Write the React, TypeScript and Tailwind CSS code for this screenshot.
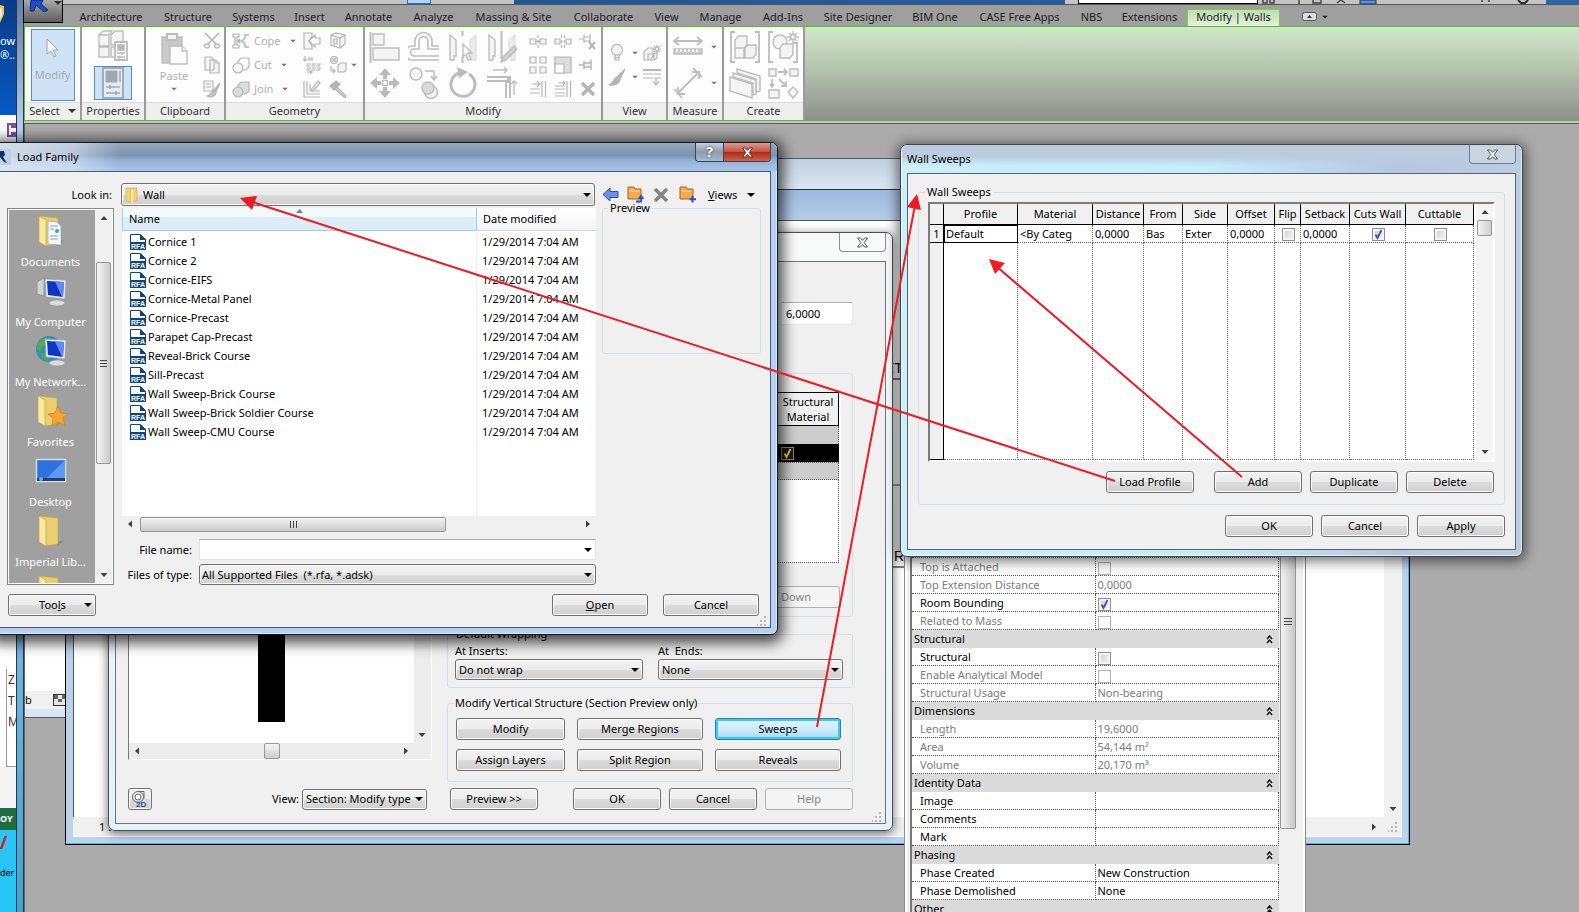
import type { ReactNode } from 'react'

const TABS = [
  { label: 'Architecture',   width: 'w-[66px]' },
  { label: 'Structure',      width: 'w-[48px]' },
  { label: 'Systems',        width: 'w-[43px]' },
  { label: 'Insert',         width: 'w-[29px]' },
  { label: 'Annotate',       width: 'w-[49px]' },
  { label: 'Analyze',        width: 'w-[41px]' },
  { label: 'Massing & Site', width: 'w-[79px]' },
  { label: 'Collaborate',    width: 'w-[61px]' },
  { label: 'View',           width: 'w-[25px]' },
  { label: 'Manage',         width: 'w-[43px]' },
  { label: 'Add-Ins',        width: 'w-[42px]' },
  { label: 'Site Designer',  width: 'w-[68px]' },
  { label: 'BIM One',        width: 'w-[46px]' },
  { label: 'CASE Free Apps', width: 'w-[83px]' },
  { label: 'NBS',            width: 'w-[21px]' },
  { label: 'Extensions',     width: 'w-[55px]' },
]

const FILES = [
  'Cornice 1',
  'Cornice 2',
  'Cornice-EIFS',
  'Cornice-Metal Panel',
  'Cornice-Precast',
  'Parapet Cap-Precast',
  'Reveal-Brick Course',
  'Sill-Precast',
  'Wall Sweep-Brick Course',
  'Wall Sweep-Brick Soldier Course',
  'Wall Sweep-CMU Course',
]

type Prop = {
  label: string
  value?: string
  kind?: 'group' | 'check'
  checked?: boolean
  dim?: boolean
}

const PROPS: Prop[] = [
  { label: 'Top Offset', value: '0,0000' },
  { label: 'Top is Attached', kind: 'check', dim: true },
  { label: 'Top Extension Distance', value: '0,0000', dim: true },
  { label: 'Room Bounding', kind: 'check', checked: true },
  { label: 'Related to Mass', kind: 'check', dim: true },
  { label: 'Structural', kind: 'group' },
  { label: 'Structural', kind: 'check' },
  { label: 'Enable Analytical Model', kind: 'check', dim: true },
  { label: 'Structural Usage', value: 'Non-bearing', dim: true },
  { label: 'Dimensions', kind: 'group' },
  { label: 'Length', value: '19,6000', dim: true },
  { label: 'Area', value: '54,144 m²', dim: true },
  { label: 'Volume', value: '20,170 m³', dim: true },
  { label: 'Identity Data', kind: 'group' },
  { label: 'Image', value: '' },
  { label: 'Comments', value: '' },
  { label: 'Mark', value: '' },
  { label: 'Phasing', kind: 'group' },
  { label: 'Phase Created', value: 'New Construction' },
  { label: 'Phase Demolished', value: 'None' },
  { label: 'Other', kind: 'group' },
]

const SWEEP_COLS = [
  { label: 'Profile',   width: 'w-[74px]' },
  { label: 'Material',  width: 'w-[75px]' },
  { label: 'Distance',  width: 'w-[51px]' },
  { label: 'From',      width: 'w-[39px]' },
  { label: 'Side',      width: 'w-[45px]' },
  { label: 'Offset',    width: 'w-[47px]' },
  { label: 'Flip',      width: 'w-[26px]' },
  { label: 'Setback',   width: 'w-[49px]' },
  { label: 'Cuts Wall', width: 'w-[56px]' },
  { label: 'Cuttable',  width: 'w-[68px]' },
]

/* ---------- small controls ---------- */

function Caret({ className = '' }: { className?: string }) {
  return (
    <svg width="8" height="4" viewBox="0 0 8 4" className={`shrink-0 ${className}`}>
      <path d="M0 0h8L4 4z" fill="currentColor" />
    </svg>
  )
}

function Btn({ children, className = '', disabled = false, hot = false }: {
  children: ReactNode
  className?: string
  disabled?: boolean
  hot?: boolean
}) {
  return (
    <button
      type="button"
      disabled={disabled}
      className={[
        'h-[22px] shrink-0 rounded-[3px] border flex items-center justify-center whitespace-nowrap',
        hot
          ? 'border-[#2c7fb5] bg-linear-to-b from-[#e8f6fd] via-[#cdeafb] to-[#a5dbf7] shadow-[inset_0_0_0_2px_#3fc8f5]'
          : disabled
            ? 'border-[#adb2b5] bg-[#f4f4f4] text-[#838383]'
            : 'border-[#707070] bg-[linear-gradient(#f3f3f3_0%,#ebebeb_50%,#dcdcdc_51%,#cfcfcf_100%)] shadow-[inset_0_0_0_1px_#fbfbfb]',
        className,
      ].join(' ')}
    >
      {children}
    </button>
  )
}

function Combo({ id, label, options, className = '', inset = 'pl-[3px]' }: {
  id: string
  label: string
  options: string[]
  className?: string
  inset?: string
}) {
  return (
    <div className={`relative ${className}`}>
      <select
        id={id}
        aria-label={label}
        className={`block size-full appearance-none rounded-[3px] border border-[#707070] bg-[linear-gradient(#f3f3f3_0%,#ebebeb_50%,#dcdcdc_51%,#cfcfcf_100%)] shadow-[inset_0_0_0_1px_#fbfbfb] ${inset}`}
      >
        {options.map(o => <option key={o}>{o}</option>)}
      </select>
      <Caret className="absolute right-1 top-1/2 -translate-y-1/2 pointer-events-none" />
    </div>
  )
}

function Check({ label, checked = false, dim = false, dark = false }: {
  label: string
  checked?: boolean
  dim?: boolean
  dark?: boolean
}) {
  return (
    <span className="relative inline-block size-[13px] align-middle">
      <input
        type="checkbox"
        aria-label={label}
        defaultChecked={checked}
        disabled={dim}
        className={[
          'block size-[13px] appearance-none border',
          dark
            ? 'border-[#8a8370] bg-[#1b1a16]'
            : dim
              ? 'border-[#b1b1b1] bg-[#fbfbfb]'
              : 'border-[#8e8f8f] bg-linear-to-br from-[#cbcfd5] to-[#f6f6f6] shadow-[inset_0_0_0_2px_#f4f4f4]',
        ].join(' ')}
      />
      {checked && (
        <svg viewBox="0 0 13 13" className="absolute inset-0 pointer-events-none">
          <path d="M3.5 6.5l2 3.5 4-8" fill="none" stroke={dark ? '#e8c96a' : '#3b55a3'} strokeWidth="1.8" />
        </svg>
      )}
    </span>
  )
}

function Arrow({ dir }: { dir: 'up' | 'down' | 'left' | 'right' }) {
  const d = {
    up: 'M4.500 10L8 6l3.500 4z',
    down: 'M4.500 6L8 10l3.500-4z',
    left: 'M10 4.500L6 8l4 3.500z',
    right: 'M6 4.500L10 8l-4 3.500z',
  }[dir]
  return (
    <svg width="16" height="16" viewBox="0 0 16 16" className="shrink-0">
      <path d={d} fill="#404040" />
    </svg>
  )
}

function Grip({ className = '' }: { className?: string }) {
  return (
    <svg width="10" height="10" viewBox="0 0 10 10" className={className}>
      <path d="M7 0h2v2H7zM7 4h2v2H7zM7 8h2v2H7zM3 4h2v2H3zM3 8h2v2H3zM0 8h1v2H0z" fill="#b8b8b8" />
    </svg>
  )
}

function CloseGlyph({ light = false }: { light?: boolean }) {
  return (
    <svg width="13" height="11" viewBox="0 0 13 11">
      <path
        d="M1.5 1h3l2 2.4L8.500 1h3L8.200 5.500l3.300 4.500h-3l-2-2.400L4.500 10h-3l3.300-4.500z"
        fill={light ? '#fff' : '#f4f6f8'}
        stroke={light ? '#5b2a26' : '#4d5663'}
      />
    </svg>
  )
}

function RevitMark({ className = '' }: { className?: string }) {
  return (
    <svg viewBox="0 0 16 16" className={className}>
      <rect width="16" height="16" fill="#bcd0e6" />
      <path d="M0 12L3 2h6l1 4-2 2 4 6-3-1-4-5-2 5z" fill="#0f2f73" />
    </svg>
  )
}

/* ---------- ribbon icons ---------- */

const big = 'size-8 shrink-0 fill-[#f4f4f4] stroke-[#bdbdbd]'
const small = 'size-[18px] shrink-0 fill-[#f4f4f4] stroke-[#b5b5b5]'

function Big({ children }: { children: ReactNode }) {
  return <svg viewBox="0 0 32 32" className={big} strokeWidth="1.4">{children}</svg>
}

function Small({ children }: { children: ReactNode }) {
  return <svg viewBox="0 0 18 18" className={small} strokeWidth="1.2">{children}</svg>
}

const IconCubes = () => (
  <Big>
    <path d="M2 5l4-4h9l-3 4zM2 5h10v11H2zM14 5l4-4h8v9l-3 5h-9zM2 17h10v10H2zM14 17h4v10h-4z" />
    <path d="M18 12h12v18H18z" strokeWidth="1.8" />
    <path d="M21 15h6v5h-6z" fill="#b5b5b5" />
    <path d="M20 23h8M20 27h8M25 22v3M22 26v3" />
  </Big>
)

const IconSheet = () => (
  <svg viewBox="0 0 32 32" className="size-8 fill-[#e3ebf4] stroke-[#a3abb5]">
    <path d="M6 1h20v30H6z" strokeWidth="2" />
    <path d="M9 4h11v11H9z" fill="#9fa6ae" />
    <path d="M23 4v11M9 20h14M9 26h14M13 18v4M19 24v4" strokeWidth="1.6" />
  </svg>
)

const IconPaste = () => (
  <Big>
    <path d="M4 4h20v26H4z" fill="#c9c9c9" />
    <path d="M9 1h10v6H9z" strokeWidth="2" />
    <path d="M12 13h12l5 5v13H12z" fill="#fdfdfd" />
    <path d="M24 13v5h5" />
  </Big>
)

const IconCutScissors = () => (
  <Small>
    <path d="M2 1l12 12M16 1L4 13" strokeWidth="1.600" />
    <ellipse cx="4" cy="14" rx="2.500" ry="1.800" />
    <ellipse cx="14" cy="14" rx="2.500" ry="1.800" />
  </Small>
)

const IconCopy = () => (
  <Small>
    <path d="M2 1h6l3 3v10H2zM7 4h6l3 3v10H7z" />
    <path d="M13 4v3h3" />
  </Small>
)

const IconMatch = () => (
  <Small>
    <path d="M1 1h9v10H1z" />
    <path d="M3 4h5M3 7h5" />
    <path d="M17 3l-6 7 2 2z" fill="#b5b5b5" />
    <path d="M11 10c-3 1-2 5-7 6 4 2 9 0 9-4z" fill="#c4c4c4" />
  </Small>
)

const IconCope = () => (
  <Small>
    <path d="M1 2h6v3H5v8h2v3H1v-3h2V5H1z" />
    <path d="M17 3h-4v3l-3 3 3 3v3h4M10 9H6M8 7L6 9l2 2" fill="none" strokeWidth="1.5" />
  </Small>
)

const IconCutShape = () => (
  <Small>
    <path d="M6 5l3-3h8v9l-3 3H6z" fill="#fff" />
    <circle cx="6" cy="12" r="5" />
  </Small>
)

const IconJoin = () => (
  <Small>
    <path d="M6 5l3-3h8v9l-3 3H6z" fill="#dcdcdc" />
    <circle cx="6" cy="12" r="5" fill="#dcdcdc" />
  </Small>
)

const IconWallJoin = () => (
  <Small>
    <path d="M1 1h8v3l-3 5 3 5v3H1z" />
    <path d="M17 6h-5V3L6 9l6 6v-3h5z" fill="#fff" />
  </Small>
)

const IconSplitFace = () => (
  <Small>
    <path d="M2 3l9 3 5-3v9l-5 4-9-3z" />
    <path d="M2 3l5-2 9 2M11 6v10M5 7h3v5H5z" />
  </Small>
)

const IconBeam = () => (
  <Small>
    <path d="M2 0v5M0 3l2 2 2-2M6 1v4M9 1v4M6 3h3" fill="none" />
    <path d="M4 8h13v2H4zM4 12h13v2H4z" strokeDasharray="4 1" />
    <path d="M4 16h5M7 15l2 1-2 2" fill="none" />
  </Small>
)

const IconPaint = () => (
  <Small>
    <circle cx="5" cy="4" r="3.500" />
    <path d="M3 2l4 4M7 2L3 6M2 10v5h4M4 13l2 2-2 2" fill="none" />
    <path d="M9 9l3-2h5v7l-2 2H9z" />
  </Small>
)

const IconDemolish = () => (
  <Small>
    <path d="M1 1v16h16M4 1v13h13M7 4v7h10" fill="none" />
    <path d="M8 10l7-9 2 2-7 8z" />
  </Small>
)

const IconHammer = () => (
  <Small>
    <path d="M1 6l6-5 4 3-6 6z" fill="#b5b5b5" />
    <path d="M8 7l9 9-1 2L6 9z" fill="#d0d0d0" />
  </Small>
)

const IconAlign = () => (
  <Big>
    <path d="M1.500 1v31" strokeWidth="2" />
    <path d="M4 3h11v11H4zM4 17h26v12H4z" />
  </Big>
)

const IconOffset = () => (
  <Big>
    <path d="M31 25H6a3 3 0 010-7h5v-8a4.500 4.500 0 019 0v8h11" fill="none" strokeWidth="1.600" />
    <path d="M31 29H5a7 7 0 01-1-14h3v-5a8.500 8.500 0 0117 0v5h7" fill="none" strokeWidth="1.600" />
  </Big>
)

const IconMirror = () => (
  <Big>
    <path d="M3 4l6 5v16H7v4H3z" />
    <path d="M29 4l-6 5v16h2v4h4z" fill="#ebebeb" stroke="#e0e0e0" />
    <path d="M15.500 0v5M15.500 26v6" strokeWidth="2" />
    <path d="M16 13l9 9h-4l3 6-3 1-2-6-3 3z" fill="#fff" />
  </Big>
)

const IconMirrorDraw = () => (
  <Big>
    <path d="M3 4l6 5v16H7v4H3z" />
    <path d="M29 4l-6 5v16h2v4h4z" fill="#ebebeb" stroke="#e0e0e0" />
    <path d="M15.500 0v28" strokeWidth="2" />
    <path d="M28 15l3 3-11 11-5 2 2-5z" fill="#d0d0d0" />
  </Big>
)

const IconMove = () => (
  <Big>
    <path d="M16 1l6 7h-4v4h-4V8h-4zM16 31l-6-7h4v-4h4v4h4zM1 16l7-6v4h4v4H8v4zM31 16l-7 6v-4h-4v-4h4v-4z" fill="#bababa" stroke="none" />
    <path d="M13.500 13.500h5v5h-5z" fill="#fff" />
  </Big>
)

const IconCopyShape = () => (
  <Big>
    <circle cx="8" cy="7" r="6" />
    <circle cx="23" cy="25" r="6.500" />
    <circle cx="20" cy="21" r="6" fill="#dadada" />
    <path d="M17 4h9v8M23 9l3 4 3-4" fill="none" />
  </Big>
)

const IconRotate = () => (
  <Big>
    <path d="M22 7a12 12 0 11-10-1" fill="none" strokeWidth="3" />
    <path d="M10 0l11 5-9 6z" fill="#bababa" stroke="none" />
  </Big>
)

const IconTrim = () => (
  <Big>
    <path d="M1 10h23v21M1 14h19v17M22 10v6" fill="none" strokeWidth="2" />
    <path d="M7 3h14M18 0l3 3-3 3M28 28V14M25 17l3-3 3 3" fill="none" />
  </Big>
)

const IconSplit = () => (
  <Small><path d="M1 7h6v5H1zM11 7h6v5h-6zM9 3v3M9 8v3M9 13v3M6 9.500h6" /></Small>
)

const IconSplitGap = () => (
  <Small>
    <path d="M1 7h5v5H1zM12 7h5v5h-5z" />
    <path d="M7.500 3v13M10.500 3v13" strokeDasharray="3 2" />
  </Small>
)

const IconUnpin = () => (
  <Small>
    <path d="M0 7h5M5 3v8M5 5h6M5 9h6M11 2v9" />
    <path d="M10 10l6 7M16 10l-6 7" strokeWidth="2" />
  </Small>
)

const IconArray = () => (
  <Small><path d="M1 1h6v6H1zM11 1h6v6h-6zM1 11h6v6H1zM11 11h6v6h-6z" /></Small>
)

const IconScale = () => (
  <Small>
    <path d="M1 1h16v16H1z" fill="#dedede" />
    <path d="M1 8h9v9H1z" fill="#fff" />
  </Small>
)

const IconPin = () => (
  <Small><path d="M0 9h5M5 5v8M5 7h7v4H5M12 4v10" strokeWidth="1.500" /></Small>
)

const IconTrimOne = () => (
  <Small><path d="M1 9h10M1 13h10M13 1v16M16.500 1v16M3 4h8M8 1l3 3-3 3" fill="none" /></Small>
)

const IconTrimMany = () => (
  <Small><path d="M1 6h10M1 9h10M1 13h10M1 16h10M13 1v16M16.500 1v16M4 3h7M9 1l2 2-2 2" fill="none" /></Small>
)

const IconDelete = () => (
  <Small><path d="M3 3l12 12M15 3L3 15" strokeWidth="3.500" /></Small>
)

const IconBulb = () => (
  <Small>
    <circle cx="8" cy="6" r="5.500" />
    <path d="M6 11h4v5H6zM6 13.500h4" />
  </Small>
)

const IconLineBrush = () => (
  <Small>
    <path d="M16 1L8 9l3 2z" fill="#b5b5b5" />
    <path d="M8 9c-4 1-3 6-8 8 6 1 11-2 11-6z" fill="#b5b5b5" />
  </Small>
)

const IconDisplace = () => (
  <Small>
    <path d="M1 8l4-4h5v8l-3 4H1zM5 10h6v6H5zM11 10l3-2v6l-3 2" />
    <path d="M14 1v8M10 5h8M11 2l6 6M17 2l-6 6" />
    <circle cx="14" cy="5" r="1.800" />
  </Small>
)

const IconThin = () => (
  <Small>
    <path d="M0 2h18" strokeWidth="2" />
    <path d="M0 6h18M0 10h18" strokeDasharray="10 1" />
    <path d="M13 10v6M10 13l3 4 3-4" fill="none" />
  </Small>
)

const IconRuler = () => (
  <Big>
    <path d="M2 10h28M7 6l-5 4 5 4M25 6l5 4-5 4" fill="none" strokeWidth="1.800" />
    <path d="M2 18h28v5H2z" fill="#cfcfcf" />
    <path d="M5 18v3M9 18v3M13 18v3M17 18v3M21 18v3M25 18v3" stroke="#fff" />
  </Big>
)

const IconDim = () => (
  <Big>
    <path d="M5 27L27 5M2 22l8 9M21 1l9 9M6 20v7h7M20 5h7v7" fill="none" strokeWidth="1.800" />
  </Big>
)

const IconGroup = () => (
  <Big>
    <path d="M6 1H2v30h4M26 1h4v30h-4" fill="none" strokeWidth="1.800" />
    <path d="M6 9l4-4h8v9l-3 3H6zM6 17h9v10H6zM16 17l3-3h8v9l-3 4h-8z" />
  </Big>
)

const IconAssembly = () => (
  <Big>
    <path d="M6 1H2v30h4M26 12h4v19h-4" fill="none" strokeWidth="1.800" />
    <circle cx="13" cy="11" r="7" />
    <path d="M13 17l3-4h10v10l-3 4H13z" />
    <path d="M26 0v12M20 6h12M22 2l8 8M30 2l-8 8" />
    <circle cx="26" cy="6" r="2.500" />
  </Big>
)

const IconParts = () => (
  <Big>
    <path d="M8 2l23 7v15l-4 1V12L8 6z" />
    <path d="M4 6l23 7v14l-3 1V16L4 10z" />
    <path d="M1 10l22 7v14L1 24z" />
  </Big>
)

const IconSimilar = () => (
  <Big>
    <path d="M2 2h7v7H2zM23 2h8v7h-8zM2 23h10v8H2zM26 20l5 5-5 6-5-6z" />
    <path d="M11 5h9M17 2l3 3-3 3M5 12v7M3 17l2 3 2-3M12 12l7 7M19 14v5h-5" fill="none" strokeWidth="1.800" />
  </Big>
)

/* ---------- ribbon ---------- */

function Panel({ title, className, children, caret = false }: {
  title: string
  className: string
  children: ReactNode
  caret?: boolean
}) {
  return (
    <section className={`flex flex-col shrink-0 bg-[#fdfdfd] border-r-2 border-[#9a9a9a] ${className}`}>
      <div className="h-[75px] flex items-center justify-center text-[#b0b0b0]">{children}</div>
      <h2 className="flex-1 flex items-center justify-center gap-2 pb-[2px] bg-[#eee] border-t border-[#dcdcdc] text-[#333] whitespace-nowrap">
        {title}
        {caret && <Caret />}
      </h2>
    </section>
  )
}

function GeoRow({ icon, label }: { icon: ReactNode; label: string }) {
  return (
    <button type="button" disabled className="flex items-center gap-1 h-6">
      {icon}
      {label}
      <Caret className="ml-1 text-[#777] scale-75" />
    </button>
  )
}

function Ribbon() {
  return (
    <div className="h-[95px] flex shrink-0 border-y border-[#56c222] border-l bg-linear-to-b from-[#d1e7c8] via-[#b2c0ac] via-50% to-[#8f8f8f]">
      <Panel title="Select" caret className="w-[57px]">
        <button type="button" disabled className="w-11 h-[72px] border border-[#4b8fd6] bg-[#cfe2f5] flex flex-col items-center gap-2.5 pt-2 text-[#a3acb5]">
          <svg viewBox="0 0 14 20" className="h-5 w-3.5 fill-[#f6f6f6] stroke-[#9aa3ad]">
            <path d="M1 1v15l4-3 3 6 2-1-3-6h5z" />
          </svg>
          Modify
        </button>
      </Panel>
      <Panel title="Properties" className="w-16">
        <div className="flex flex-col items-center gap-1">
          <IconCubes />
          <button type="button" aria-label="Properties" disabled className="w-[38px] h-[34px] border border-[#4b8fd6] bg-[#cfe2f5] flex items-center justify-center">
            <IconSheet />
          </button>
        </div>
      </Panel>
      <Panel title="Clipboard" className="w-20">
        <div className="w-full flex justify-between pl-3 pr-[3px]">
          <button type="button" disabled className="flex flex-col items-center gap-1 pt-[2px]">
            <IconPaste />
            Paste
            <Caret className="text-[#777] scale-75" />
          </button>
          <div className="flex flex-col py-px gap-1.5">
            <IconCutScissors />
            <IconCopy />
            <IconMatch />
          </div>
        </div>
      </Panel>
      <Panel title="Geometry" className="w-[139px]">
        <div className="w-full flex pl-1.5">
          <div className="w-[71px]">
            <GeoRow icon={<IconCope />} label="Cope" />
            <GeoRow icon={<IconCutShape />} label="Cut" />
            <GeoRow icon={<IconJoin />} label="Join" />
          </div>
          <div className="w-[26px] flex flex-col gap-1.5 py-[3px]">
            <IconWallJoin />
            <IconBeam />
            <IconDemolish />
          </div>
          <div className="flex flex-col gap-1.5 py-[3px]">
            <IconSplitFace />
            <IconPaint />
            <IconHammer />
          </div>
          <Caret className="self-center ml-[3px] text-[#777] scale-75" />
        </div>
      </Panel>
      <Panel title="Modify" className="w-[238px]">
        <div className="w-full flex justify-between px-1">
          <div className="grid grid-cols-4 gap-x-[7px] gap-y-1">
            <IconAlign />
            <IconOffset />
            <IconMirror />
            <IconMirrorDraw />
            <IconMove />
            <IconCopyShape />
            <IconRotate />
            <IconTrim />
          </div>
          <div className="grid grid-cols-3 gap-x-[7px] gap-y-1.5 content-center">
            <IconSplit />
            <IconSplitGap />
            <IconUnpin />
            <IconArray />
            <IconScale />
            <IconPin />
            <IconTrimOne />
            <IconTrimMany />
            <IconDelete />
          </div>
        </div>
      </Panel>
      <Panel title="View" className="w-[65px]">
        <div className="grid grid-cols-[18px_8px_18px] gap-x-1 gap-y-1.5 items-center">
          <IconBulb />
          <Caret className="text-[#777] scale-75" />
          <IconDisplace />
          <IconLineBrush />
          <Caret className="text-[#777] scale-75" />
          <IconThin />
        </div>
      </Panel>
      <Panel title="Measure" className="w-14">
        <div className="grid grid-cols-[32px_8px] gap-x-1.5 gap-y-1 items-center">
          <IconRuler />
          <Caret className="text-[#777] scale-75" />
          <IconDim />
          <Caret className="text-[#777] scale-75" />
        </div>
      </Panel>
      <Panel title="Create" className="w-[81px] border-r-0">
        <div className="grid grid-cols-2 gap-x-1.5 gap-y-1">
          <IconGroup />
          <IconAssembly />
          <IconParts />
          <IconSimilar />
        </div>
      </Panel>
    </div>
  )
}

function TabBar() {
  return (
    <nav className="h-[21px] shrink-0 bg-[#9f9f9f] pl-[54px] flex text-[#1c1c1c]">
      <div className="flex gap-5 pt-[2px]">
        {TABS.map(tab => (
          <a key={tab.label} href="#" className={`flex items-center justify-center whitespace-nowrap ${tab.width}`}>
            {tab.label}
          </a>
        ))}
      </div>
      <a href="#" className="ml-2.5 mt-1 pb-[2px] w-[93px] border border-b-0 border-[#6fd63b] bg-linear-to-b from-[#c0dcb4] to-[#e2f4da] flex items-center justify-center whitespace-nowrap">
        Modify | Walls
      </a>
      <button type="button" aria-label="Minimize ribbon" className="ml-[22px] pt-[2px] flex items-center gap-1">
        <svg width="15" height="9" viewBox="0 0 15 9">
          <rect x=".5" y=".5" width="14" height="8" rx="2" fill="#d9dde2" stroke="#555" />
          <path d="M5 6l2.500-3L10 6z" fill="#333" />
        </svg>
        <Caret className="scale-75" />
      </button>
    </nav>
  )
}

function QuickAccess() {
  return (
    <div className="h-[5px] shrink-0 flex bg-linear-to-r from-[#1b4f8e] to-[#2b67a8] border-b border-[#555] overflow-hidden">
      <div className="w-[490px] bg-[#c4c4c4] flex justify-end pr-[83px]">
        <span className="w-6 border border-t-0 border-[#1d6fd1] bg-[#b5d3f3]" />
      </div>
      <div className="ml-auto w-[481px] bg-[#c4c4c4] pl-[13px] flex">
        <span className="w-[180px] bg-white border border-t-0 border-black" />
        <svg viewBox="0 0 280 4" className="w-[280px] h-1 ml-1">
          <path d="M1 0v3h4V0M8 0v3h4V0M37 0v4M51 0v3h8V0M75 3l4-3 4 3M220 0v2M227 0v2" fill="none" stroke="#444" strokeWidth="1.500" />
          <path d="M98 0h16v4H98z" fill="#5b8fe0" stroke="#234" />
          <path d="M256 0l3 3h4l3-3" fill="none" stroke="#333" strokeWidth="2" />
        </svg>
      </div>
      <div className="w-[33px]" />
    </div>
  )
}

/* ---------- things behind the dialogs ---------- */

function DesktopStrip() {
  return (
    <div className="w-4 shrink-0 flex flex-col overflow-hidden whitespace-nowrap bg-white">
      <div className="h-[115px] shrink-0 bg-linear-to-b from-[#0a3a86] to-[#0659c4] text-white text-[11px] leading-[14px]">
        <svg viewBox="0 0 16 34" className="w-4 h-[34px]">
          <path d="M0 5l4 1v8l-4 9z" fill="#f2c53c" />
          <path d="M0 8l2 1v6l-2 5z" fill="#e9eef7" />
        </svg>
        <div>ow</div>
        <div>®..</div>
      </div>
      <div className="h-[554px] shrink-0 pt-2 pl-[7px]">
        <svg viewBox="0 0 14 14" className="size-3.5">
          <path d="M1 1h12v12H1z" fill="#fff" stroke="#7a4fa3" strokeWidth="2" />
          <path d="M4 1h6v4H4zM4 9h6v4H4z" fill="#7a4fa3" />
        </svg>
      </div>
      <div className="h-[98px] shrink-0 ml-[6px] border-l border-[#999] border-b pl-px text-xs leading-[21px] text-[#5e231c]">
        <div>Z</div>
        <div>T</div>
        <div>M</div>
      </div>
      <div className="h-[41px] shrink-0 bg-[#f4f4f4]" />
      <div className="h-[22px] shrink-0 bg-[#1e6e42] text-white text-[9px] font-bold leading-[22px]">OY</div>
      <div className="flex-1 bg-[#27c6f6] text-[9px] text-black">
        <div className="h-9 text-lg leading-6 text-[#e8131c] font-bold">/</div>
        der
      </div>
    </div>
  )
}

function ProjectWindows() {
  return (
    <>
      {/* 3D view, only its corners are visible */}
      <div className="absolute left-0 top-[34px] w-[1310px] h-[560px] flex flex-col border-y border-[#4f5964] bg-[#d9e6f4]">
        <div className="h-[30px] shrink-0 bg-linear-to-b from-[#c2cfdd] to-[#d8e5f2]" />
        <div className="flex-1 bg-white" />
        <div className="h-[18px] shrink-0 mb-[8px] bg-[#f0f0f0] flex items-center gap-[21px]">
          b
          <svg viewBox="0 0 14 12" className="w-3.5 h-3">
            <rect x=".5" y=".5" width="13" height="11" fill="#e6e8ea" stroke="#333" />
            <path d="M1 1h4v4H1zM9 1h4v4H9zM5 5h4v3H5z" fill="#666" />
          </svg>
        </div>
      </div>

      {/* floor plan */}
      <div className="absolute left-10 top-[65px] w-[1345px] h-[656px] border border-black border-t-[#333] bg-[#bad2ec] shadow-[inset_-1px_-1px_0_#35c3df] flex flex-col pb-[7px] px-[7px]">
        <div className="h-[30px] shrink-0 bg-linear-to-b from-[#9db9da] to-[#b5cdea]" />
        <div className="flex-1 border-t border-l border-[#555] bg-white flex">
          <div className="flex-1 relative">
            <svg viewBox="0 0 30 300" className="absolute left-[809px] top-[130px] w-[30px] h-[300px]">
              <path d="M4 28h22M4 216h22" stroke="#000" />
              <path d="M4 134h26" stroke="#176b17" />
              <text x="2" y="22" fontSize="14" fontFamily="Liberation Sans">ET</text>
              <text x="11" y="210" fontSize="14" fontFamily="Liberation Sans">R</text>
            </svg>
          </div>
          <div className="w-[18px] bg-[#f1f1f1] flex flex-col justify-end items-center">
            <Arrow dir="down" />
          </div>
        </div>
        <div className="h-5 shrink-0 bg-[#f0f0f0] flex items-center border-b border-white pl-[26px]">
          1 : 100
          <span className="ml-auto mr-1.5"><Arrow dir="right" /></span>
          <Grip className="mr-1" />
        </div>
      </div>
    </>
  )
}

function Chevrons() {
  return (
    <svg width="7" height="9" viewBox="0 0 7 9" className="ml-auto mr-1.5">
      <path d="M1 4l2.500-3L6 4M1 8l2.500-3L6 8" fill="none" stroke="#000" strokeWidth="1.300" />
    </svg>
  )
}

function PropertiesPalette() {
  return (
    <aside className="absolute left-[904px] top-[540px] bottom-0 w-[402px] overflow-hidden bg-[#f0f0f0] border-x border-[#8b8b8b] shadow-[inset_2px_0_0_#fff,inset_-2px_0_0_#fff] pl-[5px] pr-2 flex">
      <div className="flex-1 border-l-2 border-[#777] bg-white">
        <table className="w-full table-fixed border-separate border-spacing-0">
          <tbody>
            {PROPS.map((p, i) =>
              p.kind === 'group' ? (
                <tr key={i} className="h-[18px]">
                  <th colSpan={2} scope="rowgroup" className="p-0 pl-[2px] bg-[#dadada] font-normal">
                    <div className="flex items-center h-[18px]">
                      {p.label}
                      <Chevrons />
                    </div>
                  </th>
                </tr>
              ) : (
                <tr key={i} className={`h-[18px] ${p.dim ? 'text-[#7c7c7c]' : ''}`}>
                  <th scope="row" className="h-[18px] p-0 pl-2 text-left font-normal leading-[17px] border-b border-r border-dotted border-[#555]">
                    {p.label}
                  </th>
                  <td className="h-[18px] p-0 pl-[2px] leading-[17px] border-b border-r border-dotted border-[#555]">
                    {p.kind === 'check' ? (
                      <span className="flex items-end h-[17px]">
                        <Check label={p.label} checked={p.checked} dim={p.dim} />
                      </span>
                    ) : p.value}
                  </td>
                </tr>
              ),
            )}
          </tbody>
        </table>
      </div>
      <div className="w-[18px] px-px bg-[#f0f0f0]">
        <div className="h-[289px] border border-t-0 border-[#979797] rounded-b-xs bg-linear-to-r from-[#f3f3f3] to-[#c6c6c6] flex flex-col items-center pt-[78px] gap-[2px]">
          <span className="w-2 h-px bg-[#444]" />
          <span className="w-2 h-px bg-[#444]" />
          <span className="w-2 h-px bg-[#444]" />
        </div>
      </div>
    </aside>
  )
}

/* ---------- dialogs ---------- */

function EditAssembly() {
  return (
    <div role="dialog" aria-label="Edit Assembly" className="absolute left-[108px] top-[232px] w-[785px] rounded-[7px] border border-[#4a5258] bg-linear-to-b from-[#fafafa] to-[#e2f3f6] px-[6px] pb-[6px] shadow-[0_2px_9px_1px_rgba(0,0,0,0.5)]">
      <div className="h-7 flex justify-end">
        <button type="button" aria-label="Close" className="w-[47px] h-[19px] border border-t-0 border-[#8a8f96] rounded-b-[4px] flex items-center justify-center">
          <CloseGlyph />
        </button>
      </div>
      <div className="border border-[#6d7479] bg-[#f0f0f0] h-[563px] pl-3 pr-8 flex flex-col">
        <div className="h-[522px] flex gap-[15px]">
          <div className="w-[304px] h-[498px] flex flex-col border border-[#777] border-r-white border-b-white">
            <div className="flex-1 flex">
              <div className="flex-1 bg-white flex justify-center">
                <div className="w-[27px] h-[459px] bg-black" />
              </div>
              <div className="w-[17px] bg-[#ececec] flex flex-col justify-end">
                <Arrow dir="down" />
              </div>
            </div>
            <div className="h-4 bg-[#ececec] flex items-center pr-[17px]">
              <Arrow dir="left" />
              <span className="w-4 h-4 ml-[119px] border border-[#979797] rounded-xs bg-linear-to-b from-[#f3f3f3] to-[#cfcfcf]" />
              <span className="ml-auto"><Arrow dir="right" /></span>
            </div>
          </div>

          <div className="flex-1 flex flex-col">
            <input
              aria-label="Sample height"
              defaultValue="6,0000"
              className="mt-10 self-end w-[72px] h-[23px] px-1 bg-white border border-[#e3e9ef] border-t-[#abadb3]"
            />
            <fieldset className="mt-12 h-[244px] border border-[#d5dfe5] rounded-[3px] px-2">
              <table className="ml-auto mr-[3px] mt-[18px] w-[64px] border-separate border-spacing-0 bg-white border-r-2 border-[#fff]">
                <thead>
                  <tr>
                    <th className="p-0 h-[34px] font-normal leading-[15px] bg-[#f0f0f0] border border-black">
                      Structural Material
                    </th>
                  </tr>
                </thead>
                <tbody>
                  <tr><td className="h-[18px] p-0 bg-[#cdcdcd] border-x border-dotted border-[#555]" /></tr>
                  <tr>
                    <td className="h-[18px] p-0 pl-1 bg-black leading-none">
                      <Check label="Structural material" checked dark />
                    </td>
                  </tr>
                  <tr><td className="h-[18px] p-0 bg-[#cdcdcd] border border-dotted border-[#555]" /></tr>
                  <tr><td className="h-[83px] p-0 border border-t-0 border-dotted border-[#555]" /></tr>
                </tbody>
              </table>
              <div className="flex justify-end mt-[23px] pr-1">
                <Btn disabled className="w-[88px]">Down</Btn>
              </div>
            </fieldset>
            <fieldset className="mt-[10px] h-[61px] border border-[#d5dfe5] rounded-[3px] px-[7px]">
              <legend className="px-px leading-[14px]">Default Wrapping</legend>
              <div className="pt-px flex gap-[15px]">
                <div className="flex flex-col">
                  <label htmlFor="inserts" className="leading-[17px]">At Inserts:</label>
                  <Combo id="inserts" label="At Inserts" options={['Do not wrap', 'Exterior', 'Interior', 'Both']} className="w-[188px] h-[21px]" />
                </div>
                <div className="flex flex-col">
                  <label htmlFor="ends" className="leading-[17px]">At&nbsp; Ends:</label>
                  <Combo id="ends" label="At Ends" options={['None', 'Exterior', 'Interior']} className="w-[185px] h-[21px]" />
                </div>
              </div>
            </fieldset>
            <fieldset className="mt-[8px] h-[86px] border border-[#d5dfe5] rounded-[3px] px-2">
              <legend className="px-px -ml-[2px] leading-[14px] whitespace-nowrap">Modify Vertical Structure (Section Preview only)</legend>
              <div className="mt-2 grid grid-cols-[109px_126px_126px] gap-x-3 gap-y-[9px]">
                <Btn>Modify</Btn>
                <Btn>Merge Regions</Btn>
                <Btn hot>Sweeps</Btn>
                <Btn>Assign Layers</Btn>
                <Btn>Split Region</Btn>
                <Btn>Reveals</Btn>
              </div>
            </fieldset>
          </div>
        </div>

        <div className="mt-1 flex items-center">
          <Btn className="w-6">
            <svg viewBox="0 0 20 18" className="w-5 h-[18px]">
              <circle cx="8" cy="7" r="5.500" fill="none" stroke="#667" />
              <circle cx="8" cy="7" r="3" fill="#fff" stroke="#667" />
              <path d="M8 1.500h6v7" fill="none" stroke="#667" />
              <text x="6" y="17" fontSize="8" fontWeight="700" fontFamily="Liberation Sans" fill="#1c4f9c">2D</text>
            </svg>
          </Btn>
          <label htmlFor="view" className="w-[147px] text-right">View:</label>
          <Combo id="view" label="View" options={['Section: Modify type', 'Floor Plan: Modify type']} className="ml-[3px] w-[125px] h-[21px]" />
          <Btn className="ml-[23px] w-[88px]">Preview &gt;&gt;</Btn>
          <div className="ml-auto flex gap-2">
            <Btn className="w-[88px]">OK</Btn>
            <Btn className="w-[88px]">Cancel</Btn>
            <Btn disabled className="w-[88px]">Help</Btn>
          </div>
        </div>
      </div>
      <Grip className="absolute right-2.5 bottom-2" />
    </div>
  )
}

function WallSweeps() {
  return (
    <div role="dialog" aria-label="Wall Sweeps" className="absolute left-[900px] top-[144px] w-[623px] rounded-[7px] border border-[#3d454e] bg-[linear-gradient(90deg,#c9f0fa_0%,#c4ecfb_50%,#b4c8df_80%,#bccde1_100%)] px-[6px] pb-[6px] shadow-[inset_0_0_0_1px_rgba(255,255,255,0.6),0_2px_12px_3px_rgba(0,0,0,0.5)]">
      <div className="-mx-[5px] px-[5px] h-7 flex items-center justify-between rounded-t-[6px] bg-[linear-gradient(#bccbdd_0%,#bccbdd_40%,transparent_75%)]">
        <h2>Wall Sweeps</h2>
        <button type="button" aria-label="Close" className="self-start w-[47px] h-[19px] border border-t-0 border-[#6f7c8c] rounded-b-[4px] bg-white/20 flex items-center justify-center">
          <CloseGlyph />
        </button>
      </div>
      <div className="border border-[#59636e] bg-[#f0f0f0] pt-[11px] px-[10px] pb-3">
        <fieldset className="h-[320px] border border-[#d5dfe5] rounded-[3px] px-[9px]">
          <legend className="px-[2px] leading-[14px] -ml-[3px]">Wall Sweeps</legend>
          <div className="mt-[3px] h-[260px] flex border-2 border-r-white border-b-white border-[#7c7c7c] bg-white">
            <table className="table-fixed border-separate border-spacing-0 whitespace-nowrap">
              <thead>
                <tr className="h-[21px] bg-[#f0f0f0]">
                  <th className="w-[14px] p-0 border-r border-b border-black" />
                  {SWEEP_COLS.map(c => (
                    <th key={c.label} scope="col" className={`h-[21px] p-0 font-normal leading-[18px] border-r border-b border-black ${c.width}`}>
                      {c.label}
                    </th>
                  ))}
                </tr>
              </thead>
              <tbody>
                <tr className="[&>td]:h-[18px] [&>td]:p-0 [&>td]:pl-[2px] [&>td]:leading-[16px] [&>td]:overflow-hidden [&>td]:border-r [&>td]:border-b [&>td]:border-dotted [&>td]:border-[#666]">
                  <th scope="row" className="p-0 font-normal leading-[16px] bg-[#f0f0f0] border-r border-b border-black">1</th>
                  <td className="outline-1 outline-black -outline-offset-1">Default</td>
                  <td>&lt;By Categ</td>
                  <td>0,0000</td>
                  <td>Bas</td>
                  <td>Exter</td>
                  <td>0,0000</td>
                  <td className="text-center"><Check label="Flip" /></td>
                  <td>0,0000</td>
                  <td className="text-center"><Check label="Cuts wall" checked /></td>
                  <td className="text-center"><Check label="Cuttable" /></td>
                </tr>
                <tr>
                  <td className="h-[216px] p-0 bg-[#f0f0f0] border-r border-b border-black" />
                  {SWEEP_COLS.map(c => (
                    <td key={c.label} className="p-0 border-r border-b border-dotted border-[#666]" />
                  ))}
                </tr>
              </tbody>
            </table>
            <div className="ml-auto w-[17px] bg-[#f4f4f4] flex flex-col items-center">
              <Arrow dir="up" />
              <span className="w-[15px] h-4 border border-[#979797] rounded-xs bg-linear-to-r from-[#f3f3f3] to-[#cfcfcf]" />
              <span className="mt-auto"><Arrow dir="down" /></span>
            </div>
          </div>
          <div className="mt-[9px] flex justify-end gap-2 pr-px">
            <Btn className="w-[88px] mr-3">Load Profile</Btn>
            <Btn className="w-[88px]">Add</Btn>
            <Btn className="w-[88px]">Duplicate</Btn>
            <Btn className="w-[88px]">Delete</Btn>
          </div>
        </fieldset>
        <div className="mt-[10px] flex justify-end gap-2">
          <Btn className="w-[88px]">OK</Btn>
          <Btn className="w-[88px]">Cancel</Btn>
          <Btn className="w-[88px]">Apply</Btn>
        </div>
      </div>
    </div>
  )
}

const Folder = ({ children }: { children?: ReactNode }) => (
  <svg viewBox="0 0 32 34" className="w-8 h-[34px]">
    <path d="M20 28l10-2-8 6z" fill="#777" opacity=".5" />
    <path d="M4 2l19 2v26l-12 2z" fill="#e9cf6f" stroke="#c9a83e" strokeWidth=".7" />
    {children}
    <path d="M4 2l7 4v26l-7-4z" fill="#f8e9a4" stroke="#c9a83e" strokeWidth=".7" />
  </svg>
)

const Monitor = ({ globe = false }: { globe?: boolean }) => (
  <svg viewBox="0 0 32 34" className="w-8 h-[34px]">
    {globe ? (
      <>
        <circle cx="14" cy="15" r="13" fill="#2e8fc4" />
        <path d="M3 9c4-5 9-6 12-5l-2 6-5 2-2 5-4-2zM5 19l6 1 3 7c-5 0-8-4-9-8z" fill="#4fae46" />
      </>
    ) : (
      <path d="M2 8l7-4v18l-7-2z" fill="#cfd3d6" stroke="#888" strokeWidth=".7" />
    )}
    <ellipse cx="22" cy="29" rx="8" ry="3" fill="#d9dcdf" stroke="#8a8a8a" strokeWidth=".5" />
    <path d="M10 5l21 1-1 19-19-2z" fill="#e8edf2" stroke="#999" strokeWidth=".7" />
    <path d="M12 7l17 1-1 15-15-2z" fill="#1034c4" />
    <path d="M20 7.500l9 .5-1 15-1 0z" fill="#5f8bf0" />
  </svg>
)

const PLACES = [
  {
    label: 'Documents',
    icon: (
      <Folder>
        <path d="M13 7l9 1 4 4v19l-13-1z" fill="#f5f7fa" stroke="#9aa" strokeWidth=".7" />
        <path d="M15 12h8M15 15h4M15 22h8M15 25h8" stroke="#8fa3b5" />
        <circle cx="22" cy="17" r="2" fill="#3c9fd6" />
      </Folder>
    ),
  },
  { label: 'My Computer', icon: <Monitor /> },
  { label: 'My Network…', icon: <Monitor globe /> },
  {
    label: 'Favorites',
    icon: (
      <>
        <Folder />
        <svg viewBox="0 0 20 20" className="size-5 -ml-[18px] mt-3">
          <path d="M10 0l3 7 7 1-5 4 2 8-7-4-6 4 1-8-5-4 7-1z" fill="#f7a52c" stroke="#d27c10" strokeWidth=".7" />
        </svg>
      </>
    ),
  },
  {
    label: 'Desktop',
    icon: (
      <svg viewBox="0 0 32 34" className="w-8 h-[34px]">
        <path d="M1.500 5.500h29v22h-29z" fill="#2f6fe0" stroke="#d4dce6" strokeWidth="1.500" />
        <path d="M2 24h28v3H2z" fill="#24406b" />
        <path d="M30 6v18H12z" fill="#5c9bf2" />
        <circle cx="6" cy="25" r="2" fill="#4fc3b5" />
      </svg>
    ),
  },
  { label: 'Imperial Lib…', icon: <Folder /> },
  { label: '', icon: <Folder /> },
]

function RfaIcon() {
  return (
    <svg viewBox="0 0 16 16" className="size-4 shrink-0">
      <path d="M.500 .500h10l5 5v10H.500z" fill="#fff" stroke="#0d4583" />
      <path d="M10 0l6 6h-6z" fill="#0d4583" />
      <path d="M0 8h16v8H0z" fill="#0d4583" />
      <text x="8" y="15" textAnchor="middle" fontSize="7" fontWeight="700" fontFamily="Liberation Sans" fill="#fff">RFA</text>
    </svg>
  )
}

const SmallFolder = ({ mark }: { mark: 'up' | 'plus' }) => (
  <svg viewBox="0 0 18 17" className="w-[18px] h-[17px]">
    <path d="M1 3V1h6l1 2h6v10H1z" fill="#f2ab53" stroke="#a5621c" />
    <path d="M2 5h11" stroke="#fbd7a4" />
    {mark === 'plus'
      ? <path d="M13.500 10v6.500M10.500 13.300h6.500" stroke="#2b51b8" strokeWidth="2" />
      : <path d="M9 15.500h5V11M11.500 13l2.500-3 2.500 3" fill="none" stroke="#2b51b8" strokeWidth="1.800" />}
  </svg>
)

function LoadFamily() {
  return (
    <div role="dialog" aria-label="Load Family" className="absolute -left-2 top-[142px] w-[786px] rounded-[7px] border border-[#15181c] bg-[#b3d1f2] pr-[6px] pl-[7px] pb-[6px] shadow-[inset_0_0_0_1px_rgba(255,255,255,0.5),0_3px_14px_5px_rgba(0,0,0,0.7)]">
      <div className="-mx-[6px] h-7 pr-[6px] pl-px rounded-t-[6px] flex items-center bg-[linear-gradient(90deg,rgba(235,242,248,0.75)_0%,rgba(225,235,245,0.6)_10%,transparent_16%),linear-gradient(#94a8bf_0%,#7d94ae_45%,#90b0d6_60%,#a9c6e8_100%)]">
        <RevitMark className="size-4" />
        <h2 className="ml-[6px] text-black">Load Family</h2>
        <div className="ml-auto self-start flex h-[19px] border border-t-0 border-[#3b4552] rounded-b-[4px] overflow-hidden">
          <button type="button" aria-label="Help" className="w-7 border-r border-[#3b4552] bg-linear-to-b from-[#c5d0dc] via-[#8d9cae] to-[#a5b9cf] text-white text-sm leading-[18px] font-bold [text-shadow:0_0_2px_#222]">?</button>
          <button type="button" aria-label="Close" className="w-[46px] bg-[linear-gradient(#dc9a8f_0%,#c4523f_50%,#a92d18_51%,#d0604a_100%)] flex items-center justify-center">
            <CloseGlyph light />
          </button>
        </div>
      </div>
      <div className="border border-l-0 border-[#4c5b6b] bg-[#f0f0f0] pt-[11px] pb-[11px]">
        <div className="h-[23px] flex items-center">
          <label htmlFor="lookin" className="w-[112px] text-right">Look in:</label>
          <div className="relative ml-[9px]">
            <Combo id="lookin" label="Look in" options={['Wall', 'Profiles', 'Imperial Library']} className="w-[474px] h-[23px]" inset="pl-[21px]" />
            <svg viewBox="0 0 16 16" className="absolute left-1 top-1 size-4 pointer-events-none">
              <path d="M1 1h5v14l-5-1zM7 1h5v13H7z" fill="#eed476" stroke="#c9a83e" strokeWidth=".6" />
              <path d="M6 3l2-1v13l-2 1z" fill="#f8e9a4" />
            </svg>
          </div>
          <div className="ml-[7px] flex items-center gap-2">
            <button type="button" aria-label="Back">
              <svg viewBox="0 0 17 15" className="w-[17px] h-[15px]">
                <path d="M1 7.500L8 1v3.500h8v6H8V14z" fill="#6d8fe0" stroke="#2f4fa8" />
              </svg>
            </button>
            <button type="button" aria-label="Up one level"><SmallFolder mark="up" /></button>
            <button type="button" aria-label="Delete">
              <svg viewBox="0 0 16 16" className="size-4">
                <path d="M2 2l12 12M14 2L2 14" stroke="#858585" strokeWidth="3.500" />
              </svg>
            </button>
            <button type="button" aria-label="New folder" className="ml-[2px]"><SmallFolder mark="plus" /></button>
          </div>
          <button type="button" className="ml-[11px] flex items-center gap-2.5">
            <span><u>V</u>iews</span>
            <Caret />
          </button>
        </div>

        <div className="mt-[2px] flex">
          <div className="ml-[7px] w-[107px] h-[377px] border border-[#82878c] bg-white p-px flex">
            <div className="flex-1 pr-[3px] bg-[#a0a0a0] overflow-hidden text-white">
              {PLACES.map((p, i) => (
                <a key={i} href="#" className="h-[60px] flex flex-col items-center gap-px pt-1">
                  <span className="flex h-10">{p.icon}</span>
                  {p.label}
                </a>
              ))}
            </div>
            <div className="w-[17px] bg-[#f0f0f0] flex flex-col items-center">
              <Arrow dir="up" />
              <span className="mt-[36px] w-[15px] h-[202px] border border-[#979797] rounded-xs bg-linear-to-r from-[#f5f5f5] to-[#c9c9c9] flex flex-col items-center justify-center gap-[2px]">
                <i className="w-[7px] h-px bg-[#444]" />
                <i className="w-[7px] h-px bg-[#444]" />
                <i className="w-[7px] h-px bg-[#444]" />
              </span>
              <span className="mt-auto"><Arrow dir="down" /></span>
            </div>
          </div>

          <div className="ml-2 w-[474px]">
            <div className="h-[308px] bg-white flex">
              <table className="w-full self-start table-fixed border-separate border-spacing-0 text-left">
                <thead>
                  <tr>
                    <th scope="col" className="relative w-[355px] h-[23px] p-0 pl-[6px] font-normal bg-[linear-gradient(#f3fafe_40%,#dcedf7_41%)] border-x border-b border-[#96d3ef]">
                      Name
                      <svg viewBox="0 0 7 4" className="absolute left-[173px] top-px w-[7px] h-1">
                        <path d="M0 4l3.500-4L7 4z" fill="#5a8aa3" />
                      </svg>
                    </th>
                    <th scope="col" className="h-[23px] p-0 pl-[6px] font-normal bg-linear-to-b from-white to-[#f3f4f6] border-b border-[#d5d5d5]">Date modified</th>
                  </tr>
                </thead>
                <tbody>
                  <tr><td className="h-px p-0 border-r border-[#e6f0fa]" /><td className="p-0" /></tr>
                  {FILES.map(f => (
                    <tr key={f}>
                      <td className="h-[19px] p-0 pl-2 border-r border-[#e6f0fa]">
                        <span className="flex items-center gap-[2px] leading-[19px] whitespace-pre"><RfaIcon />{f}</span>
                      </td>
                      <td className="h-[19px] p-0 pl-[5px] leading-[19px]">1/29/2014 7:04 AM</td>
                    </tr>
                  ))}
                  <tr><td className="h-[75px] p-0 border-r border-[#e6f0fa]" /><td className="p-0" /></tr>
                </tbody>
              </table>
            </div>
            <div className="h-4 bg-[#f0f0f0] flex items-center">
              <Arrow dir="left" />
              <span className="ml-[2px] w-[306px] h-[15px] border border-[#979797] rounded-xs bg-linear-to-b from-[#f3f3f3] to-[#c9c9c9] flex items-center justify-center gap-[2px]">
                <i className="w-px h-[7px] bg-[#444]" />
                <i className="w-px h-[7px] bg-[#444]" />
                <i className="w-px h-[7px] bg-[#444]" />
              </span>
              <span className="ml-auto"><Arrow dir="right" /></span>
            </div>
            <div className="mt-[7px] flex items-center">
              <label htmlFor="filename" className="w-[70px] text-right">File name:</label>
              <div className="relative ml-[7px] flex-1 h-[21px]">
                <input id="filename" className="block size-full px-1 bg-white border border-[#e2e3ea] border-t-[#abadb3]" />
                <Caret className="absolute right-1 top-[9px]" />
              </div>
            </div>
            <div className="mt-1 flex items-center">
              <label htmlFor="filetype" className="w-[70px] text-right whitespace-nowrap">Files of type:</label>
              <Combo id="filetype" label="Files of type" options={['All Supported Files\u00a0 (*.rfa, *.adsk)']} className="ml-[7px] flex-1 h-[21px]" inset="pl-[2px]" />
            </div>
          </div>

          <fieldset className="-mt-[7px] ml-[6px] w-[159px] h-[153px] border border-[#d5dfe5] rounded-[3px]">
            <legend className="ml-[5px] px-[2px] leading-[14px]">Preview</legend>
          </fieldset>
        </div>

        <div className="mt-[9px] pl-2 pr-[11px] flex">
          <Btn className="w-[88px]">
            <span className="flex-1 pl-3">Too<u>l</u>s</span>
            <Caret className="mr-[3px]" />
          </Btn>
          <div className="ml-auto flex gap-[15px]">
            <Btn className="w-24"><u>O</u>pen</Btn>
            <Btn className="w-24">Cancel</Btn>
          </div>
        </div>
      </div>
      <Grip className="absolute right-2.5 bottom-2" />
    </div>
  )
}

/* red pointers that tie the buttons to what they open */
function Callouts() {
  return (
    <svg viewBox="0 0 1579 912" className="absolute left-0 top-0 w-[1579px] h-[912px] pointer-events-none" stroke="#ed1c24" strokeWidth="2">
      <path d="M1115 481L252 202M817 727L915 205M1242 477L996 266" />
      <path d="M240 198l17-2-5 14zM917 194l4 16-14-3zM989 259l16 4-10 11z" fill="#ed1c24" stroke="none" />
    </svg>
  )
}

export default function App() {
  return (
    <main className="relative h-screen overflow-hidden flex bg-[#ababab] text-[11px] leading-[14px] text-black font-['Noto_Sans',sans-serif]">
      <DesktopStrip />
      <div className="w-2 shrink-0 border-x border-[#333] bg-linear-to-b from-[#5f7fae] via-[#b9d6f8] via-15% to-[#3ba5d6]" />
      <div className="relative flex-1 min-w-0 flex flex-col">
        <QuickAccess />
        <TabBar />
        <button type="button" aria-label="Application menu" className="absolute -left-px top-0 w-10 h-[23px] border border-t-0 border-black bg-linear-to-b from-[#aaa] to-[#5e5e5e]">
          <svg viewBox="0 0 38 22" className="w-[38px] h-[22px]">
            <path d="M7 0h12l-2 4 7 6-4 2-8-7-2 6H6z" fill="#1d4fc0" stroke="#0b2a7c" />
            <path d="M30 1h8l-4 4z" fill="#333" />
          </svg>
        </button>
        <Ribbon />
        <div className="h-[3px] shrink-0 bg-[#c4c4c4] border-b border-[#5c5c5c]" />
        <div className="relative flex-1 bg-[#ababab] overflow-hidden border-l border-[#666]">
          <ProjectWindows />
        </div>
      </div>
      <PropertiesPalette />
      <EditAssembly />
      <WallSweeps />
      <LoadFamily />
      <Callouts />
    </main>
  )
}
